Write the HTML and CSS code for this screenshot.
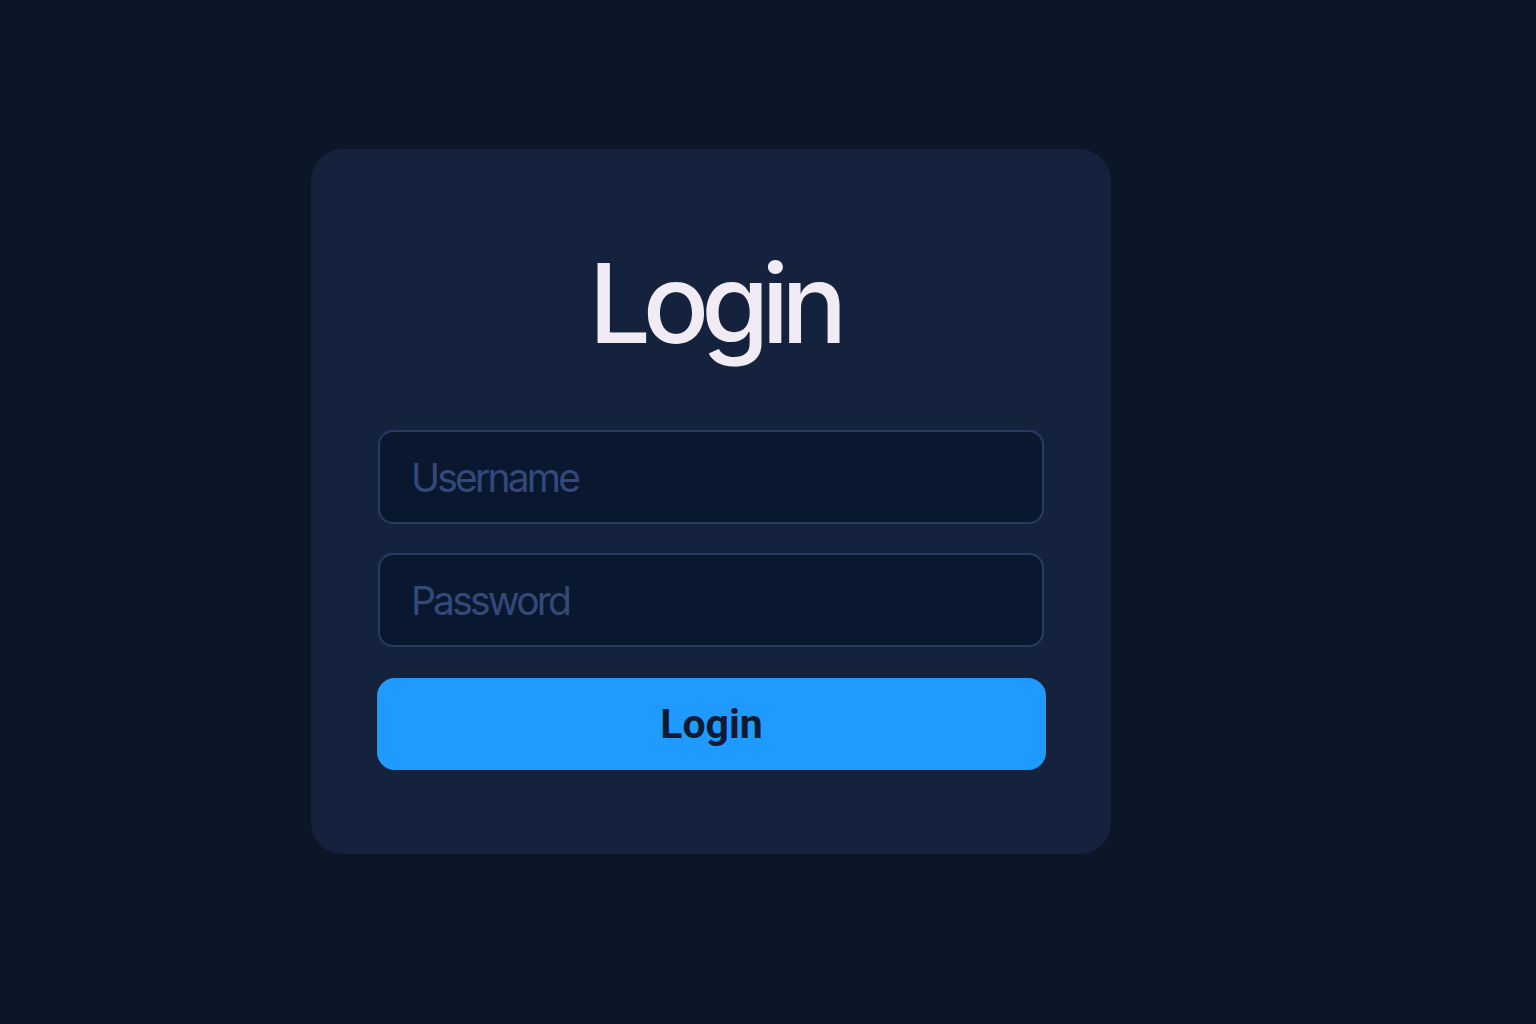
FILE: index.html
```html
<!DOCTYPE html>
<html>
<head>
    <title>Login</title>
    <link rel="stylesheet" href="styles.css">
</head>
<body>
    <div class="login-card">
        <h1 class="login-title">Login</h1>
        <form class="login-form" onsubmit="return false">
            <input class="field" type="text" placeholder="Username">
            <input class="field" type="password" placeholder="Password">
            <button class="login-button" type="submit">Login</button>
        </form>
    </div>
</body>
</html>
```

FILE: styles.css
```css
body {
    background-color: #0b1628;
    margin: 0;
    height: 100vh;
    font-family: Inter, "Noto Sans", sans-serif;
}

.login-card {
    position: relative;
    box-sizing: border-box;
    width: 800px;
    height: 705px;
    margin-left: 311px;
    top: 149px;
    background-color: #14223d;
    border-radius: 32px;
    padding: 84px 67px 0 67px;
}

.login-title {
    margin: 0 0 57px 0;
    padding-left: 6px;
    text-align: center;
    color: #f1ebf3;
    font-size: 110px;
    font-weight: 550;
    line-height: 140px;
    letter-spacing: -8px;
}

.login-form {
    display: flex;
    flex-direction: column;
    gap: 29px;
}

.field {
    box-sizing: border-box;
    height: 94px;
    background-color: #0a182f;
    border: 2px solid #2a3a63;
    border-radius: 15px;
    padding: 0 31px;
    font-family: Inter, "Noto Sans", sans-serif;
    font-size: 39px;
    letter-spacing: -2.8px;
    color: #c9d3ec;
    outline: none;
}

.field::placeholder {
    color: #34487a;
}

.login-button {
    height: 92px;
    margin: 2px -2px 0 -1px;
    background-color: #1f9bff;
    border: none;
    border-radius: 18px;
    color: #0f1b33;
    font-family: Roboto, "Noto Sans", sans-serif;
    font-size: 41px;
    font-weight: 700;
    cursor: pointer;
}
```
